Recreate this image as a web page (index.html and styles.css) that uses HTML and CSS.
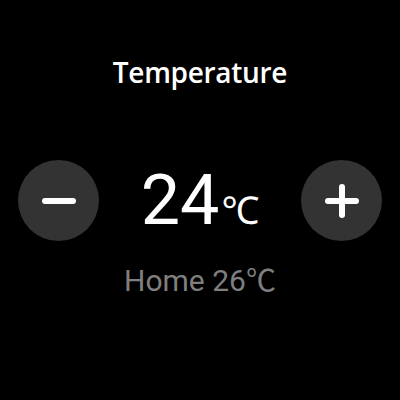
FILE: index.html
```html
<!DOCTYPE html>
<html>
<head>
<meta charset="utf-8">
<link rel="stylesheet" href="styles.css">
</head>
<body>
<div class="screen">
  <div class="title">Temperature</div>
  <div class="row">
    <button class="btn" aria-label="decrease">
      <svg width="34" height="34" viewBox="0 0 34 34"><path d="M3 17H31" stroke="#fff" stroke-width="6" stroke-linecap="round"/></svg>
    </button>
    <div class="value"><span class="num">24</span><span class="unit">℃</span></div>
    <button class="btn" aria-label="increase">
      <svg width="34" height="34" viewBox="0 0 34 34"><path d="M3 17H31M17 3V31" stroke="#fff" stroke-width="6" stroke-linecap="round"/></svg>
    </button>
  </div>
  <div class="home">Home 26℃</div>
</div>
</body>
</html>
```
FILE: styles.css
```css
html, body {
  margin: 0;
  padding: 0;
  background: #000;
}
.screen {
  width: 400px;
  height: 400px;
  display: flex;
  flex-direction: column;
  align-items: center;
  font-family: "Roboto", "Noto Sans CJK SC", sans-serif;
  color: #fff;
}
.title {
  margin-top: 52px;
  height: 40px;
  font-family: "Open Sans", "Noto Sans", sans-serif;
  font-size: 28px;
  font-weight: 600;
  letter-spacing: -0.3px;
  line-height: 40px;
}
.row {
  margin-top: 68px;
  width: 400px;
  height: 81px;
  display: flex;
  align-items: center;
  justify-content: space-between;
  padding: 0 18px;
  box-sizing: border-box;
}
.btn {
  width: 81px;
  height: 81px;
  border-radius: 50%;
  border: none;
  background: #333;
  display: flex;
  align-items: center;
  justify-content: center;
  padding: 0;
}
.value {
  height: 81px;
  line-height: 81px;
  font-size: 70px;
  white-space: nowrap;
}
.num {
  margin-right: 2px;
}
.unit {
  font-size: 38px;
  line-height: 0;
  font-family: "Noto Sans", sans-serif;
}
.home {
  margin-top: 20px;
  font-size: 30px;
  color: #7f7f7f;
  line-height: 40px;
}
```
